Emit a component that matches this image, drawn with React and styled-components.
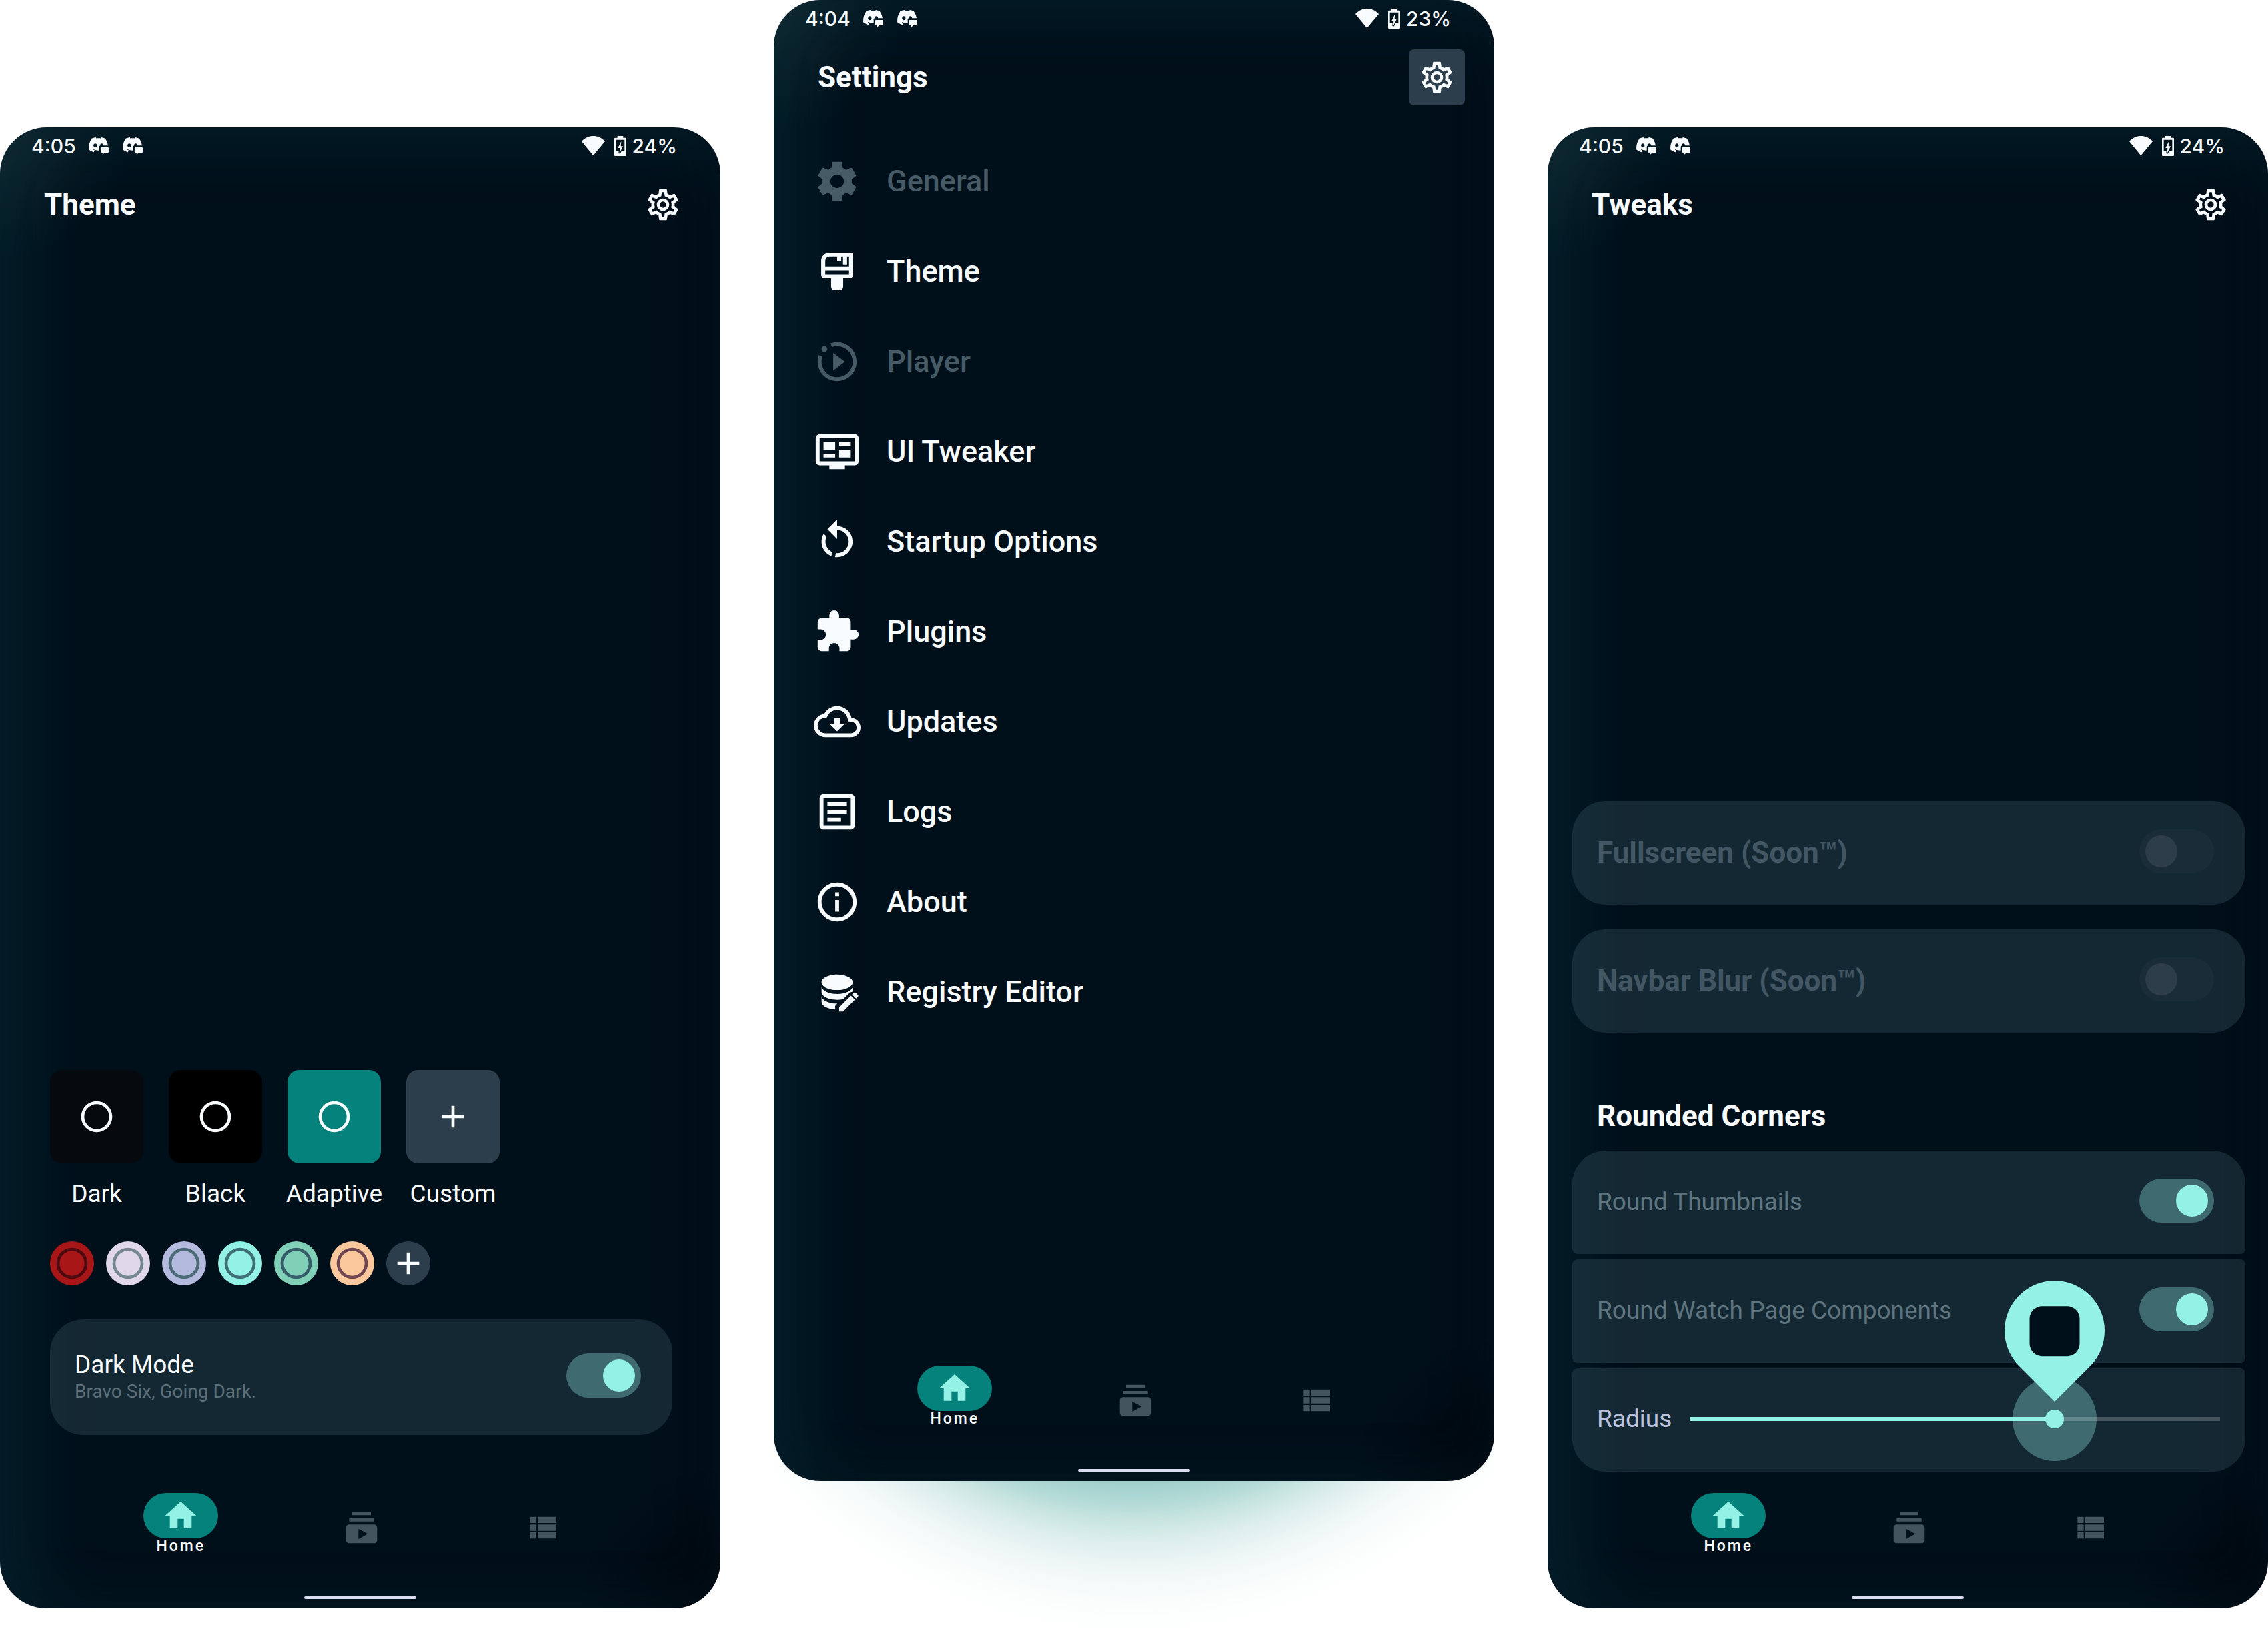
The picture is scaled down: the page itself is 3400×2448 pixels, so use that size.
import React, { useState } from "react";
import styled, { createGlobalStyle, css } from "styled-components";

const color = {
  base: "#00101b",
  text: "#f8fcff",
  muted: "#465b66",
  mint: "#93f1e6",
  teal: "#04827b",
  slate: "#2c3e4c",
  card: "rgba(190, 250, 255, 0.105)",
  track: "#3f6b70",
};

const GlobalStyle = createGlobalStyle`
  *, *::before, *::after { box-sizing: border-box; }
  body {
    margin: 0;
    background: #ffffff;
    font-family: Roboto, "Noto Sans", sans-serif;
    color: ${color.text};
  }
  h1, h2, p, ul { margin: 0; padding: 0; }
  button { font: inherit; color: inherit; border: 0; padding: 0; background: none; cursor: pointer; }
  a { color: inherit; text-decoration: none; }
`;

/* ---------- page and phone shell ---------- */

const Page = styled.main`
  display: flex;
  align-items: flex-start;
  gap: 80px;
  min-height: 100vh;
`;

const Column = styled.div`
  position: relative;
  flex: 1;
  min-width: 0;
  margin-top: ${(p) => (p.$lowered ? "191px" : "0")};
`;

const Glow = styled.div`
  position: absolute;
  left: 0;
  right: 0;
  top: 100%;
  height: 228px;
  margin-top: -60px;
  padding-top: 60px;
  box-sizing: content-box;
  background: radial-gradient(
    circle 748px at 50% -460px,
    #9fcfcb 520px,
    #b3dad7 553px,
    #c7e4e0 578px,
    #dceeec 610px,
    #f0f7f7 655px,
    #fafcfc 700px,
    #ffffff 748px
  );
`;

const Screen = styled.section`
  position: relative;
  display: flex;
  flex-direction: column;
  min-height: 2220px;
  border-radius: 70px;
  overflow: hidden;
  background:
    radial-gradient(circle at 0 0, rgba(45, 60, 64, 0.35), transparent 200px),
    radial-gradient(circle at 100% 100%, rgba(0, 0, 5, 0.6), transparent 220px),
    ${color.base};
  box-shadow:
    inset 34px 14px 100px rgba(20, 100, 115, 0.22),
    inset -24px -10px 70px rgba(0, 2, 10, 0.35);
`;

const StatusBar = styled.div`
  display: flex;
  align-items: center;
  height: 56px;
  padding: 0 65px 0 47px;
  font: 500 30px/40px Inter, Roboto, sans-serif;
`;

const StatusIcons = styled.span`
  display: flex;
  gap: 21px;
  margin-left: 19px;
`;

const StatusRight = styled.span`
  display: flex;
  align-items: center;
  gap: 9px;
  margin-left: auto;

  svg:first-child { margin-right: 5px; }
`;

const Header = styled.header`
  display: flex;
  align-items: center;
  justify-content: space-between;
  height: 84px;
  margin-top: 18px;
  padding: 0 44px 0 66px;
`;

const Title = styled.h1`
  font-size: 44px;
  line-height: 52px;
  font-weight: 700;
`;

const IconButton = styled.button`
  display: grid;
  place-items: center;
  width: 84px;
  height: 84px;
  border-radius: 8px;
  background: ${(p) => (p.$active ? color.slate : "transparent")};
`;

const Content = styled.div`
  flex: 1;
  display: flex;
  flex-direction: column;
  justify-content: ${(p) => (p.$top ? "flex-start" : "flex-end")};
  padding: ${(p) => p.$pad};
`;

/* ---------- bottom navigation ---------- */

const NavBar = styled.nav`
  display: grid;
  grid-template-columns: repeat(3, 1fr);
  justify-items: center;
  align-items: center;
  height: 104px;
  padding: 0 132px 0 136px;
  color: #44545f;
`;

const NavItem = styled.a`
  display: flex;
  flex-direction: column;
  align-items: center;
  ${(p) => p.$active && css`padding-bottom: 12px;`}
`;

const NavPill = styled.span`
  display: grid;
  place-items: center;
  width: 112px;
  height: 68px;
  border-radius: 34px;
  background: ${color.teal};
  color: ${color.mint};
`;

const NavLabel = styled.span`
  font-size: 23px;
  line-height: 24px;
  font-weight: 500;
  letter-spacing: 3px;
  color: ${color.text};
`;

const HomeIndicator = styled.div`
  width: 168px;
  height: 4px;
  margin: 51px auto 14px;
  border-radius: 2px;
  background: #dcdcf0;
`;

/* ---------- settings menu ---------- */

const Menu = styled.ul`
  list-style: none;
`;

const MenuLink = styled.a`
  display: flex;
  align-items: center;
  gap: 39px;
  height: 135px;
  font-size: 45px;
  line-height: 54px;
  font-weight: 500;
  color: ${(p) => (p.$disabled ? color.muted : color.text)};
`;

/* ---------- theme screen ---------- */

const ThemeRow = styled.div`
  display: flex;
  gap: 38px;
`;

const ThemeOption = styled.button`
  display: flex;
  flex-direction: column;
  align-items: center;
  gap: 24px;
  width: 140px;
  font-size: 37px;
  line-height: 44px;
  white-space: nowrap;
`;

const ThemeTile = styled.span`
  display: grid;
  place-items: center;
  width: 140px;
  height: 140px;
  border-radius: 18px;
  background: ${(p) => p.$fill};
`;

const SwatchRow = styled.div`
  display: flex;
  gap: 18px;
  margin: 49px 0 51px;
`;

const Swatch = styled.button`
  display: grid;
  place-items: center;
  width: 66px;
  height: 66px;
  border-radius: 50%;
  background: ${(p) => p.$fill};
  color: ${(p) => p.$ring};
`;

/* ---------- cards, switches, slider ---------- */

const Card = styled.label`
  display: flex;
  align-items: center;
  justify-content: space-between;
  min-height: ${(p) => (p.$tall ? "173px" : "155px")};
  padding: 0 47px 2px 37px;
  border-radius: ${(p) => p.$radius || "50px"};
  background: ${color.card};
`;

const CardText = styled.span`
  display: flex;
  flex-direction: column;
`;

const CardTitle = styled.span`
  font-size: 37px;
  line-height: 44px;
  color: ${(p) => p.$color || color.text};
`;

const CardHeading = styled.span`
  font-size: 44px;
  line-height: 52px;
  font-weight: 700;
  color: #425763;
`;

const CardNote = styled.span`
  font-size: 28px;
  line-height: 36px;
  color: #5d707a;
`;

const Switch = styled.input.attrs({ type: "checkbox" })`
  appearance: none;
  flex: none;
  display: flex;
  align-items: center;
  width: 112px;
  height: 66px;
  margin: 0 0 4px;
  padding: 0 9px;
  border-radius: 33px;
  background: #1a2c38;
  cursor: pointer;

  &::before {
    content: "";
    width: 48px;
    height: 48px;
    border-radius: 50%;
    background: #2d3e4a;
  }
  &:checked { justify-content: flex-end; background: ${color.track}; }
  &:checked::before { background: ${color.mint}; }
`;

const CardStack = styled.div`
  display: flex;
  flex-direction: column;
  gap: ${(p) => p.$gap};
`;

const SectionTitle = styled.h2`
  margin: 99px 0 26px;
  padding-left: 37px;
  font-size: 44px;
  line-height: 52px;
  font-weight: 700;
`;

const SliderRow = styled.div`
  display: flex;
  align-items: center;
  gap: 28px;
  min-height: 155px;
  padding: 0 38px 4px 37px;
  border-radius: 8px 8px 50px 50px;
  background: ${color.card};
`;

const SliderLabel = styled.label`
  font-size: 37px;
  line-height: 44px;
  color: #bcc3de;
`;

const SliderBox = styled.div`
  position: relative;
  flex: 1;
  display: flex;
`;

const Halo = styled.span`
  position: absolute;
  left: var(--thumb);
  top: 50%;
  width: 126px;
  height: 126px;
  margin: -63px 0 0 -63px;
  border-radius: 50%;
  background: ${color.track};
  pointer-events: none;
`;

const Range = styled.input.attrs({ type: "range" })`
  appearance: none;
  position: relative;
  width: 100%;
  height: 28px;
  margin: 0;
  background: transparent;

  &::-webkit-slider-runnable-track {
    height: 6px;
    background: linear-gradient(
      to right,
      ${color.mint} var(--thumb),
      rgba(195, 205, 215, 0.27) var(--thumb)
    );
  }
  &::-webkit-slider-thumb {
    appearance: none;
    width: 28px;
    height: 28px;
    margin-top: -11px;
    border-radius: 50%;
    background: ${color.mint};
  }
`;

const Pin = styled.output`
  position: absolute;
  left: var(--thumb);
  bottom: 71px;
  display: grid;
  place-items: center;
  width: 150px;
  height: 150px;
  margin-left: -75px;
  border-radius: 50% 50% 0 50%;
  background: ${color.mint};
  transform: rotate(45deg);
  pointer-events: none;
`;

const PinPreview = styled.span`
  width: 75px;
  height: 75px;
  border-radius: 19px;
  background: ${color.base};
  transform: rotate(-45deg);
`;

/* ---------- icons ---------- */

const paths = {
  cog: "M12,15.5A3.5,3.5 0 0,1 8.5,12A3.5,3.5 0 0,1 12,8.5A3.5,3.5 0 0,1 15.5,12A3.5,3.5 0 0,1 12,15.5M19.43,12.97C19.47,12.65 19.5,12.33 19.5,12C19.5,11.67 19.47,11.34 19.43,11L21.54,9.37C21.73,9.22 21.78,8.95 21.66,8.73L19.66,5.27C19.54,5.05 19.27,4.96 19.05,5.05L16.56,6.05C16.04,5.66 15.5,5.32 14.87,5.07L14.5,2.42C14.46,2.18 14.25,2 14,2H10C9.75,2 9.54,2.18 9.5,2.42L9.13,5.07C8.5,5.32 7.96,5.66 7.44,6.05L4.95,5.05C4.73,4.96 4.46,5.05 4.34,5.27L2.34,8.73C2.21,8.95 2.27,9.22 2.46,9.37L4.57,11C4.53,11.34 4.5,11.67 4.5,12C4.5,12.33 4.53,12.65 4.57,12.97L2.46,14.63C2.27,14.78 2.21,15.05 2.34,15.27L4.34,18.73C4.46,18.95 4.73,19.03 4.95,18.95L7.44,17.94C7.96,18.34 8.5,18.68 9.13,18.93L9.5,21.58C9.54,21.82 9.75,22 10,22H14C14.25,22 14.46,21.82 14.5,21.58L14.87,18.93C15.5,18.67 16.04,18.34 16.56,17.94L19.05,18.95C19.27,19.03 19.54,18.95 19.66,18.73L21.66,15.27C21.78,15.05 21.73,14.78 21.54,14.63L19.43,12.97Z",
  cogOutline: "M12,8A4,4 0 0,1 16,12A4,4 0 0,1 12,16A4,4 0 0,1 8,12A4,4 0 0,1 12,8M12,10A2,2 0 0,0 10,12A2,2 0 0,0 12,14A2,2 0 0,0 14,12A2,2 0 0,0 12,10M10,22C9.75,22 9.54,21.82 9.5,21.58L9.13,18.93C8.5,18.68 7.96,18.34 7.44,17.94L4.95,18.95C4.73,19.03 4.46,18.95 4.34,18.73L2.34,15.27C2.21,15.05 2.27,14.78 2.46,14.63L4.57,12.97L4.5,12L4.57,11L2.46,9.37C2.27,9.22 2.21,8.95 2.34,8.73L4.34,5.27C4.46,5.05 4.73,4.96 4.95,5.05L7.44,6.05C7.96,5.66 8.5,5.32 9.13,5.07L9.5,2.42C9.54,2.18 9.75,2 10,2H14C14.25,2 14.46,2.18 14.5,2.42L14.87,5.07C15.5,5.32 16.04,5.66 16.56,6.05L19.05,5.05C19.27,4.96 19.54,5.05 19.66,5.27L21.66,8.73C21.79,8.95 21.73,9.22 21.54,9.37L19.43,11L19.5,12L19.43,13L21.54,14.63C21.73,14.78 21.79,15.05 21.66,15.27L19.66,18.73C19.54,18.95 19.27,19.04 19.05,18.95L16.56,17.95C16.04,18.34 15.5,18.68 14.87,18.93L14.5,21.58C14.46,21.82 14.25,22 14,22H10M11.25,4L10.88,6.61C9.68,6.86 8.62,7.5 7.85,8.39L5.44,7.35L4.69,8.65L6.8,10.2C6.4,11.37 6.4,12.64 6.8,13.8L4.68,15.36L5.43,16.66L7.86,15.62C8.63,16.5 9.68,17.14 10.87,17.38L11.24,20H12.76L13.13,17.39C14.32,17.14 15.37,16.5 16.14,15.62L18.57,16.66L19.32,15.36L17.2,13.81C17.6,12.64 17.6,11.37 17.2,10.2L19.31,8.65L18.56,7.35L16.15,8.39C15.38,7.5 14.32,6.86 13.12,6.62L12.75,4H11.25Z",
  brush: "M7.9 2.4H20.2V13.6a1.8 1.8 0 0 1-1.8 1.8H15.1V19.8a1.8 1.8 0 0 1-1.8 1.8H10.7a1.8 1.8 0 0 1-1.8-1.8V15.4H5.6a1.8 1.8 0 0 1-1.8-1.8V6.5a4.1 4.1 0 0 1 4.1-4.1ZM8 4.4A2.1 2.1 0 0 0 5.9 6.5V9.5H18.1V4.4H17.1V8.5H15V4.4H14.1V6.5H12V4.4ZM5.9 11.5V13.5H18.1V11.5Z",
  player: "M10 16.5l6-4.5-6-4.5v9zM22 12c0 5.52-4.48 10-10 10S2 17.52 2 12c0-1.19.22-2.32.6-3.38l1.88.68C4.17 10.14 4 11.05 4 12c0 4.41 3.59 8 8 8s8-3.59 8-8-3.59-8-8-8c-.95 0-1.85.17-2.69.48l-.68-1.89C9.69 2.22 10.82 2 12 2c5.52 0 10 4.48 10 10zM5.5 4C4.67 4 4 4.67 4 5.5S4.67 7 5.5 7 7 6.33 7 5.5 6.33 4 5.5 4z",
  monitor: "M3 3H21a2 2 0 0 1 2 2V17a2 2 0 0 1-2 2H16V21H8V19H3a2 2 0 0 1-2-2V5A2 2 0 0 1 3 3ZM3 5V17H21V5ZM5 7H11V11H5ZM13 7H19V9H13ZM13 11H19V15H13ZM5 13H11V15H5Z",
  restart: "M12,4C14.1,4 16.1,4.8 17.6,6.3C20.7,9.4 20.7,14.5 17.6,17.6C15.8,19.5 13.3,20.2 10.9,19.9L11.4,17.9C13.1,18.1 14.9,17.5 16.2,16.2C18.5,13.9 18.5,10.1 16.2,7.7C15.1,6.6 13.5,6 12,6V10.6L7,5.6L12,0.6V4M6.3,17.6C3.7,15 3.3,11 5.1,7.9L6.6,9.4C5.5,11.6 5.9,14.4 7.8,16.2C8.3,16.7 8.9,17.1 9.6,17.4L9,19.4C8,19 7.1,18.4 6.3,17.6Z",
  puzzle: "M20.5,11H19V7C19,5.89 18.1,5 17,5H13V3.5A2.5,2.5 0 0,0 10.5,1A2.5,2.5 0 0,0 8,3.5V5H4A2,2 0 0,0 2,7V10.8H3.5C5,10.8 6.2,12 6.2,13.5C6.2,15 5,16.2 3.5,16.2H2V20A2,2 0 0,0 4,22H7.8V20.5C7.8,19 9,17.8 10.5,17.8C12,17.8 13.2,19 13.2,20.5V22H17A2,2 0 0,0 19,20V16H20.5A2.5,2.5 0 0,0 23,13.5A2.5,2.5 0 0,0 20.5,11Z",
  cloud: "M19.35 10.04A7.49 7.49 0 0 0 12 4C9.11 4 6.6 5.64 5.35 8.04A5.994 5.994 0 0 0 0 14c0 3.31 2.69 6 6 6h13c2.76 0 5-2.24 5-5 0-2.64-2.05-4.78-4.65-4.96zM19 18H6c-2.21 0-4-1.79-4-4 0-2.05 1.53-3.76 3.56-3.97l1.07-.11.5-.95A5.469 5.469 0 0 1 12 6c2.62 0 4.88 1.86 5.39 4.43l.3 1.5 1.53.11A2.98 2.98 0 0 1 22 15c0 1.65-1.35 3-3 3zm-5.55-8h-2.9v3H8l4 4 4-4h-2.55z",
  logs: "M19 5V19H5V5H19M19 3H5C3.9 3 3 3.9 3 5V19C3 20.1 3.9 21 5 21H19C20.1 21 21 20.1 21 19V5C21 3.9 20.1 3 19 3M14 17H7V15H14V17M17 13H7V11H17V13M17 9H7V7H17V9",
  info: "M11 7h2v2h-2zM11 11h2v6h-2zM12 2C6.48 2 2 6.48 2 12s4.48 10 10 10 10-4.48 10-10S17.52 2 12 2zm0 18c-4.41 0-8-3.59-8-8s3.59-8 8-8 8 3.59 8 8-3.59 8-8 8z",
  registry: "M12 3C7.58 3 4 4.79 4 7s3.58 4 8 4 8-1.79 8-4-3.58-4-8-4ZM4 9v3c0 2.21 3.58 4 8 4 1.1 0 2.15-.1 3.1-.3l3-3c.6-.6 1.3-.9 1.9-.9V9c0 2.21-3.58 4-8 4S4 11.21 4 9ZM4 14v3c0 2.1 3.1 3.8 7 4v-1.9l1.1-1.1H12c-4.42 0-8-1.79-8-4ZM21.04 12.13c.14 0 .27.06.38.17l1.28 1.28c.22.21.22.56 0 .77l-1 1-2.05-2.05 1-1c.11-.11.25-.17.39-.17m-1.97 1.75 2.05 2.05L15.06 22H13v-2.06l6.07-6.06Z",
  home: "M10,20V14H14V20H19V12H22L12,3L2,12H5V20H10Z",
  subscriptions: "M20 8H4V6h16v2zm-2-6H6v2h12V2zm4 10v8c0 1.1-.9 2-2 2H4c-1.1 0-2-.9-2-2v-8c0-1.1.9-2 2-2h16c1.1 0 2 .9 2 2zm-6 4l-6-3.27v6.53L16 16z",
  list: "M9,5V9H21V5M9,19H21V15H9M9,14H21V10H9M4,9H8V5H4M4,19H8V15H4M4,14H8V10H4V14Z",
  ring: "M12,20A8,8 0 0,1 4,12A8,8 0 0,1 12,4A8,8 0 0,1 20,12A8,8 0 0,1 12,20M12,2A10,10 0 0,0 2,12A10,10 0 0,0 12,22A10,10 0 0,0 22,12A10,10 0 0,0 12,2Z",
  plus: "M19,13H13V19H11V13H5V11H11V5H13V11H19V13Z",
};

function Icon({ name, size = 56 }) {
  return (
    <svg width={size} height={size} viewBox="0 0 24 24" fill="currentColor" fillRule="evenodd" aria-hidden="true">
      <path d={paths[name]} />
    </svg>
  );
}

function DiscordIcon({ id }) {
  return (
    <svg width="30" height="26" viewBox="0 0 92 80" aria-hidden="true">
      <mask id={id}>
        <rect width="92" height="80" fill="#fff" />
        <path d="M54 38H96V80H48V44a6 6 0 0 1 6-6Z" fill="#000" />
      </mask>
      <g mask={`url(#${id})`}>
        <path
          transform="scale(3.75) translate(0 -2.85)"
          fill="#f8fcff"
          d="M20.317 4.3698a19.7913 19.7913 0 00-4.8851-1.5152.0741.0741 0 00-.0785.0371c-.211.3753-.4447.8648-.6083 1.2495-1.8447-.2762-3.68-.2762-5.4868 0-.1636-.3933-.4058-.8742-.6177-1.2495a.077.077 0 00-.0785-.037 19.7363 19.7363 0 00-4.8852 1.515.0699.0699 0 00-.0321.0277C.5334 9.0458-.319 13.5799.0992 18.0578a.0824.0824 0 00.0312.0561c2.0528 1.5076 4.0413 2.4228 5.9929 3.0294a.0777.0777 0 00.0842-.0276c.4616-.6304.8731-1.2952 1.226-1.9942a.076.076 0 00-.0416-.1057c-.6528-.2476-1.2743-.5495-1.8722-.8923a.077.077 0 01-.0076-.1277c.1258-.0943.2517-.1923.3718-.2914a.0743.0743 0 01.0776-.0105c3.9278 1.7933 8.18 1.7933 12.0614 0a.0739.0739 0 01.0785.0095c.1202.099.246.1981.3728.2924a.077.077 0 01-.0066.1276 12.2986 12.2986 0 01-1.873.8914.0766.0766 0 00-.0407.1067c.3604.698.7719 1.3628 1.225 1.9932a.076.076 0 00.0842.0286c1.961-.6067 3.9495-1.5219 6.0023-3.0294a.077.077 0 00.0313-.0552c.5004-5.177-.8382-9.6739-3.5485-13.6604a.061.061 0 00-.0312-.0286zM8.02 15.3312c-1.1825 0-2.1569-1.0857-2.1569-2.419 0-1.3332.9555-2.4189 2.157-2.4189 1.2108 0 2.1757 1.0952 2.1568 2.419 0 1.3332-.9555 2.4189-2.1569 2.4189zm7.9748 0c-1.1825 0-2.1569-1.0857-2.1569-2.419 0-1.3332.9554-2.4189 2.1569-2.4189 1.2108 0 2.1757 1.0952 2.1568 2.419 0 1.3332-.946 2.4189-2.1568 2.4189Z"
        />
      </g>
      <path d="M58 46H89a3 3 0 0 1 3 3V68a3 3 0 0 1-3 3H74L64 80V71H58a3 3 0 0 1-3-3V49a3 3 0 0 1 3-3Z" fill="#f8fcff" />
    </svg>
  );
}

function WifiIcon() {
  return (
    <svg width="35" height="30" viewBox="0 0 105 90" aria-hidden="true">
      <path d="M0 24C30-8 75-8 105 24L52 88Z" fill="#f8fcff" />
    </svg>
  );
}

function BatteryIcon() {
  return (
    <svg width="18" height="30" viewBox="0 0 54 90" aria-hidden="true">
      <path d="M14 0H40V8H50a4 4 0 0 1 4 4V86a4 4 0 0 1-4 4H4a4 4 0 0 1-4-4V12A4 4 0 0 1 4 8H14Z" fill="#f8fcff" />
      <path d="M8 17H46V66H8Z" fill="#01131d" />
      <path d="M31 24 16 54H25L23 78 39 46H29Z" fill="#f8fcff" stroke="#01131d" strokeWidth="8" paintOrder="stroke" />
    </svg>
  );
}

/* ---------- composition ---------- */

function Phone({ name, title, time, battery, lowered, gearActive, top, pad, children }) {
  return (
    <Column $lowered={lowered}>
      {!lowered && <Glow />}
      <Screen>
        <StatusBar>
          <span>{time}</span>
          <StatusIcons>
            <DiscordIcon id={`${name}-bubble-a`} />
            <DiscordIcon id={`${name}-bubble-b`} />
          </StatusIcons>
          <StatusRight>
            <WifiIcon />
            <BatteryIcon />
            <span>{battery}</span>
          </StatusRight>
        </StatusBar>
        <Header>
          <Title>{title}</Title>
          <IconButton type="button" $active={gearActive} aria-label="Settings">
            <Icon name="cogOutline" />
          </IconButton>
        </Header>
        <Content $top={top} $pad={pad}>
          {children}
        </Content>
        <NavBar>
          <NavItem href="#home" $active>
            <NavPill>
              <Icon name="home" />
            </NavPill>
            <NavLabel>Home</NavLabel>
          </NavItem>
          <NavItem href="#subscriptions" aria-label="Subscriptions">
            <Icon name="subscriptions" />
          </NavItem>
          <NavItem href="#library" aria-label="Library">
            <Icon name="list" />
          </NavItem>
        </NavBar>
        <HomeIndicator />
      </Screen>
    </Column>
  );
}

const themes = [
  { label: "Dark", fill: "#060a0e", icon: "ring" },
  { label: "Black", fill: "#000000", icon: "ring" },
  { label: "Adaptive", fill: color.teal, icon: "ring" },
  { label: "Custom", fill: color.slate, icon: "plus" },
];

const swatches = [
  { label: "Red", fill: "#a81617", ring: "#4d0a10" },
  { label: "Lilac", fill: "#e0d8ea", ring: "#74868f" },
  { label: "Periwinkle", fill: "#b3badd", ring: "#4a6a76" },
  { label: "Aqua", fill: "#93f1e6", ring: "#3f7076" },
  { label: "Green", fill: "#7fd0b7", ring: "#375c69" },
  { label: "Peach", fill: "#fac89c", ring: "#6e4550" },
];

const menu = [
  { label: "General", icon: "cog", disabled: true },
  { label: "Theme", icon: "brush" },
  { label: "Player", icon: "player", disabled: true },
  { label: "UI Tweaker", icon: "monitor" },
  { label: "Startup Options", icon: "restart" },
  { label: "Plugins", icon: "puzzle" },
  { label: "Updates", icon: "cloud" },
  { label: "Logs", icon: "logs" },
  { label: "About", icon: "info" },
  { label: "Registry Editor", icon: "registry" },
];

function RadiusSlider() {
  const [value, setValue] = useState(139);
  const thumb = `calc(14px + (100% - 28px) * ${value / 200})`;
  return (
    <SliderRow>
      <SliderLabel htmlFor="radius">Radius</SliderLabel>
      <SliderBox style={{ "--thumb": thumb }}>
        <Halo />
        <Range id="radius" min="0" max="200" value={value} onChange={(e) => setValue(Number(e.target.value))} />
        <Pin htmlFor="radius">
          <PinPreview />
        </Pin>
      </SliderBox>
    </SliderRow>
  );
}

export default function App() {
  return (
    <>
      <GlobalStyle />
      <Page>
        <Phone name="theme" title="Theme" time="4:05" battery="24%" lowered pad="0 72px 87px 75px">
          <ThemeRow>
            {themes.map((t) => (
              <ThemeOption key={t.label} type="button">
                <ThemeTile $fill={t.fill}>
                  <Icon name={t.icon} />
                </ThemeTile>
                {t.label}
              </ThemeOption>
            ))}
          </ThemeRow>
          <SwatchRow>
            {swatches.map((s) => (
              <Swatch key={s.label} type="button" aria-label={s.label} $fill={s.fill} $ring={s.ring}>
                <Icon name="ring" />
              </Swatch>
            ))}
            <Swatch type="button" aria-label="Add colour" $fill={color.slate} $ring={color.text}>
              <Icon name="plus" />
            </Swatch>
          </SwatchRow>
          <Card $tall>
            <CardText>
              <CardTitle>Dark Mode</CardTitle>
              <CardNote>Bravo Six, Going Dark.</CardNote>
            </CardText>
            <Switch defaultChecked />
          </Card>
        </Phone>

        <Phone name="settings" title="Settings" time="4:04" battery="23%" gearActive top pad="46px 60px 0">
          <Menu>
            {menu.map((m) => (
              <li key={m.label}>
                <MenuLink href={`#${m.icon}`} $disabled={m.disabled} aria-disabled={m.disabled}>
                  <Icon name={m.icon} size={70} />
                  {m.label}
                </MenuLink>
              </li>
            ))}
          </Menu>
        </Phone>

        <Phone name="tweaks" title="Tweaks" time="4:05" battery="24%" lowered pad="0 34px 32px 37px">
          <CardStack $gap="37px">
            <Card>
              <CardHeading>Fullscreen (Soon™)</CardHeading>
              <Switch disabled />
            </Card>
            <Card>
              <CardHeading>Navbar Blur (Soon™)</CardHeading>
              <Switch disabled />
            </Card>
          </CardStack>
          <SectionTitle>Rounded Corners</SectionTitle>
          <CardStack $gap="8px">
            <Card $radius="50px 50px 8px 8px">
              <CardTitle $color="#5f757f">Round Thumbnails</CardTitle>
              <Switch defaultChecked />
            </Card>
            <Card $radius="8px">
              <CardTitle $color="#5f757f">Round Watch Page Components</CardTitle>
              <Switch defaultChecked />
            </Card>
            <RadiusSlider />
          </CardStack>
        </Phone>
      </Page>
    </>
  );
}
